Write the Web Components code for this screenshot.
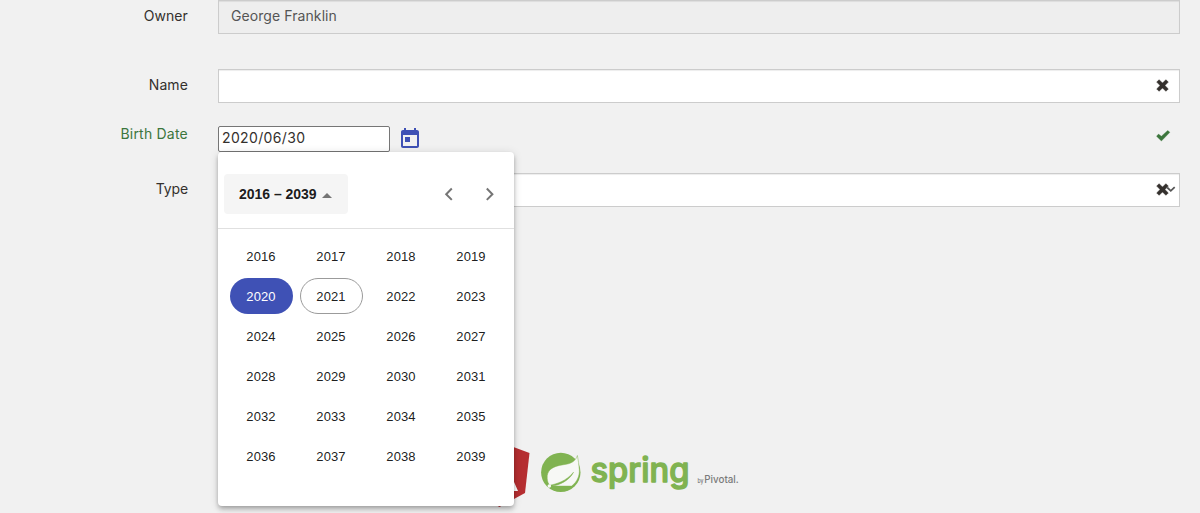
<!DOCTYPE html>
<html lang="en">
<head>
<meta charset="utf-8">
<title>Add Pet</title>
<style>
body { margin: 0; background: #f1f1f1; overflow: hidden; font-family: "Inter", "Open Sans", sans-serif; font-size: 14px; color: #34302d; }
</style>
</head>
<body>
<pet-form></pet-form>
<script>
const define = (name, html, setup) => customElements.define(name, class extends HTMLElement {
  constructor() {
    super();
    const t = document.createElement('template');
    t.innerHTML = html;
    this.attachShadow({ mode: 'open' }).appendChild(t.content.cloneNode(true));
    if (setup) setup(this.shadowRoot, this);
  }
});

define('form-row', `
<style>
:host { display: grid; grid-template-columns: 188px 962px; column-gap: 30px; align-items: start; box-sizing: border-box; }
.label { text-align: right; line-height: 20px; padding-top: var(--label-top, 6px); color: var(--label-color, #34302d); font-weight: 400; letter-spacing: var(--label-spacing, .1px); white-space: nowrap; }
.field { position: relative; display: flex; }
</style>
<div class="label"><slot name="label"></slot></div><div class="field"><slot></slot></div>`);

define('text-field', `
<style>
:host { display: flex; align-items: center; box-sizing: border-box; width: 962px; height: 34px; padding: 0 12px; background: #fff; border: 1px solid #ccc; box-shadow: inset 0 1px 1px rgba(0,0,0,.075); }
:host([disabled]) { background: #eee; color: #555; letter-spacing: .08px; padding-bottom: 3px; }
</style><slot></slot>`);

define('mark-cross', `
<style>:host { position: absolute; left: 938px; top: 10px; width: 13px; height: 13px; } svg { display: block; }</style>
<svg width="13" height="13" viewBox="0 0 13 13"><path d="M3.1 .7 6.5 4.1 9.9.7 12.3 3.1 8.9 6.5 12.3 9.9 9.9 12.3 6.5 8.9 3.1 12.3.7 9.9 4.1 6.5.7 3.1Z" fill="#34302d" stroke="#34302d" stroke-width=".5" stroke-linejoin="round"/></svg>`);

define('mark-check', `
<style>:host { position: absolute; left: 938px; top: 4px; width: 15px; height: 12px; } svg { display: block; }</style>
<svg width="15" height="12" viewBox="0 0 15 12"><path d="M.5 6.3 2.5 4.1 5.4 6.2 11.7.4 13.9 2.3 5.4 11.1Z" fill="#3c763d" stroke="#3c763d" stroke-width=".3" stroke-linejoin="round"/></svg>`);

define('select-arrow', `
<style>:host { position: absolute; left: 948px; top: 13px; width: 10px; height: 7px; } svg { display: block; }</style>
<svg width="10" height="7" viewBox="0 0 10 7"><path d="M1.2 1.5 4.8 4.8 8.7 1.2" fill="none" stroke="#555" stroke-width="1.8"/></svg>`);

define('date-input', `
<style>
:host { display: flex; align-items: center; height: 26px; }
.box { box-sizing: border-box; width: 172px; height: 26px; background: #fff; border: 1px solid #767676; border-radius: 2px; padding: 0 3px; line-height: 22px; font-size: 14px; color: #34302d; letter-spacing: .35px; }
svg { display: block; margin-left: 8px; }
</style>
<div class="box"><slot></slot></div>
<svg width="24" height="24" viewBox="0 0 24 24" fill="#3f51b5"><path d="M19 3h-1V1h-2v2H8V1H6v2H5c-1.11 0-1.99.9-1.99 2L3 19c0 1.1.89 2 2 2h14c1.1 0 2-.9 2-2V5c0-1.1-.9-2-2-2zm0 16H5V8h14v11zM7 10h5v5H7z"/></svg>`);

define('year-cell', `
<style>
:host { display: flex; align-items: center; justify-content: center; height: 40px; }
span { box-sizing: border-box; width: 63px; height: 36px; border: 1px solid transparent; border-radius: 18px; display: flex; align-items: center; justify-content: center; padding-top: 1px; }
:host([selected]) span { background: #3f51b5; color: #fff; }
:host([today]) span { border-color: #9b9b9b; }
</style><span><slot></slot></span>`);

define('year-calendar', `
<style>
:host { position: absolute; z-index: 2; left: 0; top: 26px; width: 296px; height: 354px; background: #fff; border-radius: 4px; box-shadow: 0 2px 4px -1px rgba(0,0,0,.2), 0 4px 5px rgba(0,0,0,.14), 0 1px 10px rgba(0,0,0,.12); font: 13px "Liberation Sans", Arial, sans-serif; color: rgba(0,0,0,.9); }
.head { box-sizing: border-box; height: 77px; border-bottom: 1px solid #e0e0e0; padding: 22px 4px 0 6px; display: flex; align-items: start; }
.period { box-sizing: border-box; width: 124px; height: 40px; border-radius: 4px; background: #f5f5f5; display: flex; align-items: center; padding-left: 15px; font-size: 14px; font-weight: 700; white-space: nowrap; letter-spacing: -.03px; }
.period i { margin: 3px 0 0 5px; border: 5px solid transparent; border-top: 0; border-bottom-color: #757575; }
.nav { margin-left: auto; display: flex; }
.nav svg { display: block; }
.years { display: grid; grid-template-columns: repeat(4, 70px); padding: 7px 8px; letter-spacing: .1px; }
</style>
<div class="head">
<div class="period"><span>2016 – 2039</span><i></i></div>
<div class="nav"><svg width="40" height="40" viewBox="0 0 40 40" fill="none" stroke="#757575" stroke-width="2"><path d="M21.8 14.5 16.2 20.2 21.8 25.9"/></svg><svg width="40" height="40" viewBox="0 0 40 40" fill="none" stroke="#757575" stroke-width="2"><path d="M16.8 14.5 22.4 20.2 16.8 25.9"/></svg></div>
</div>
<div class="years"></div>`, root => {
  const grid = root.querySelector('.years');
  for (let y = 2016; y < 2040; y++) {
    const cell = document.createElement('year-cell');
    cell.textContent = y;
    if (y === 2020) cell.setAttribute('selected', '');
    if (y === 2021) cell.setAttribute('today', '');
    grid.append(cell);
  }
});

define('footer-logos', `
<style>:host { display: flex; justify-content: center; } svg { display: block; }</style>
<svg width="280" height="72" viewBox="470 441 280 72">
<path d="M499.5 442 529.5 453 525 493 499.5 507 474 493 469.5 453Z" fill="#b52e31"/>
<path d="M499.5 449 518 491H511L507 482H492L488 491H481Z" fill="#fff"/>
<circle cx="560.8" cy="472.4" r="19.7" fill="#80b351"/>
<path d="M577.4 455.5C575.4 461.5 571 463.8 563.5 464.7C552 466.2 546.5 470.5 547.2 478.5C547.4 481.8 548.3 483.9 550 485.2C556 484 566 481.5 573.5 472.2C569.5 480.5 559.5 485 552.3 486.1H571.6C577.5 481.5 579.7 475.5 579.3 469.5C579 464.5 578.2 460 577.4 455.5Z" fill="#f7f8f5" stroke="#80b351" stroke-width=".5"/>
<circle cx="549.3" cy="486" r="1.8" fill="#f7f8f5"/>
<text x="590.5" y="482" textLength="99" lengthAdjust="spacingAndGlyphs" font-family="Inter, sans-serif" font-size="33.5" font-weight="500" fill="#80b351" stroke="#80b351" stroke-width="1.4" stroke-linejoin="round">spring</text>
<text x="697.5" y="482.5" textLength="6" lengthAdjust="spacingAndGlyphs" font-family="Inter, sans-serif" font-size="6.5" font-weight="500" fill="#777">by</text>
<text x="704.3" y="482.5" textLength="34.5" lengthAdjust="spacingAndGlyphs" font-family="Inter, sans-serif" font-size="10" font-weight="500" fill="#7a7a7a">Pivotal.</text>
</svg>`);

define('pet-form', `
<style>
:host { display: flex; flex-direction: column; width: 1200px; height: 513px; overflow: hidden; }
.owner { height: 69px; }
.name { height: 57px; }
.birth { height: 47px; --label-color: #3c763d; --label-top: 0; --label-spacing: .22px; }
.birth [slot] { display: block; margin-top: -2px; }
.type { height: 268px; --label-spacing: -.15px; }
footer-logos { margin-left: 20px; }
</style>
<form-row class="owner"><span slot="label">Owner</span><text-field disabled>George Franklin</text-field></form-row>
<form-row class="name"><span slot="label">Name</span><text-field></text-field><mark-cross></mark-cross></form-row>
<form-row class="birth"><span slot="label">Birth Date</span><date-input>2020/06/30</date-input><mark-check></mark-check><year-calendar></year-calendar></form-row>
<form-row class="type"><span slot="label">Type</span><text-field></text-field><mark-cross></mark-cross><select-arrow></select-arrow></form-row>
<footer-logos></footer-logos>`);
</script>
</body>
</html>
